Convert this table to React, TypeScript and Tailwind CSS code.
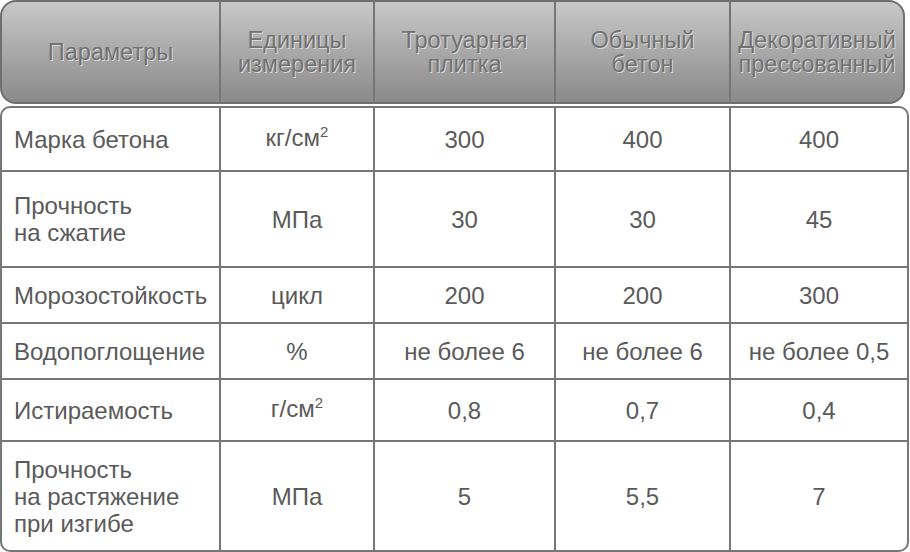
import React from "react";

const cols = "grid grid-cols-[217px_154px_181px_175px_1fr]";

type Row = { h: string; cells: React.ReactNode[] };

const Sq = ({ pre }: { pre: string }) => (
  <span>
    {pre}
    <span className="relative -top-[9px] text-[15px]">2</span>
  </span>
);

const rows: Row[] = [
  { h: "h-[62px]", cells: ["Марка бетона", <Sq pre="кг/см" />, "300", "400", "400"] },
  { h: "h-[96px]", cells: [<>Прочность<br />на сжатие</>, "МПа", "30", "30", "45"] },
  { h: "h-[56px]", cells: ["Морозостойкость", "цикл", "200", "200", "300"] },
  { h: "h-[56px]", cells: ["Водопоглощение", "%", "не более 6", "не более 6", "не более 0,5"] },
  { h: "h-[62px]", cells: ["Истираемость", <Sq pre="г/см" />, "0,8", "0,7", "0,4"] },
  { h: "h-[110px]", cells: [<>Прочность<br />на растяжение<br />при изгибе</>, "МПа", "5", "5,5", "7"] },
];

const headers: React.ReactNode[] = [
  "Параметры",
  <>Единицы<br />измерения</>,
  <>Тротуарная<br />плитка</>,
  <>Обычный<br />бетон</>,
  <>Декоративный<br />прессованный</>,
];

export default function App() {
  return (
    <div
      className="w-[910px] h-[552px] bg-white overflow-hidden"
      style={{ fontFamily: '"Liberation Sans", Arial, sans-serif' }}
    >
      <div
        className={`${cols} w-[905px] h-[104px] rounded-[16px] border-2 border-[#6f6f6f] bg-gradient-to-b from-[#c8c8c8] to-[#8a8a8a] overflow-hidden`}
      >
        {headers.map((h, i) => (
          <div
            key={i}
            className={`flex items-center justify-center text-center text-[23.5px] leading-[24px] text-[#727272] [text-shadow:1px_1px_0_#d8d8d8] ${
              i > 0 ? "border-l-2 border-[#767676]" : ""
            }`}
          >
            <div>{h}</div>
          </div>
        ))}
      </div>
      <div className="mt-[2px] w-[909px] rounded-[10px] border-2 border-[#777] overflow-hidden">
        {rows.map((r, ri) => (
          <div
            key={ri}
            className={`${cols} ${r.h} ${ri > 0 ? "border-t-2 border-[#777]" : ""}`}
          >
            {r.cells.map((c, ci) => (
              <div
                key={ci}
                className={`flex items-center text-[24px] leading-[27px] text-[#5a5a5a] ${
                  ci === 0 ? "pl-[12px] justify-start" : "justify-center text-center border-l-2 border-[#777]"
                }`}
              >
                <div>{c}</div>
              </div>
            ))}
          </div>
        ))}
      </div>
    </div>
  );
}
